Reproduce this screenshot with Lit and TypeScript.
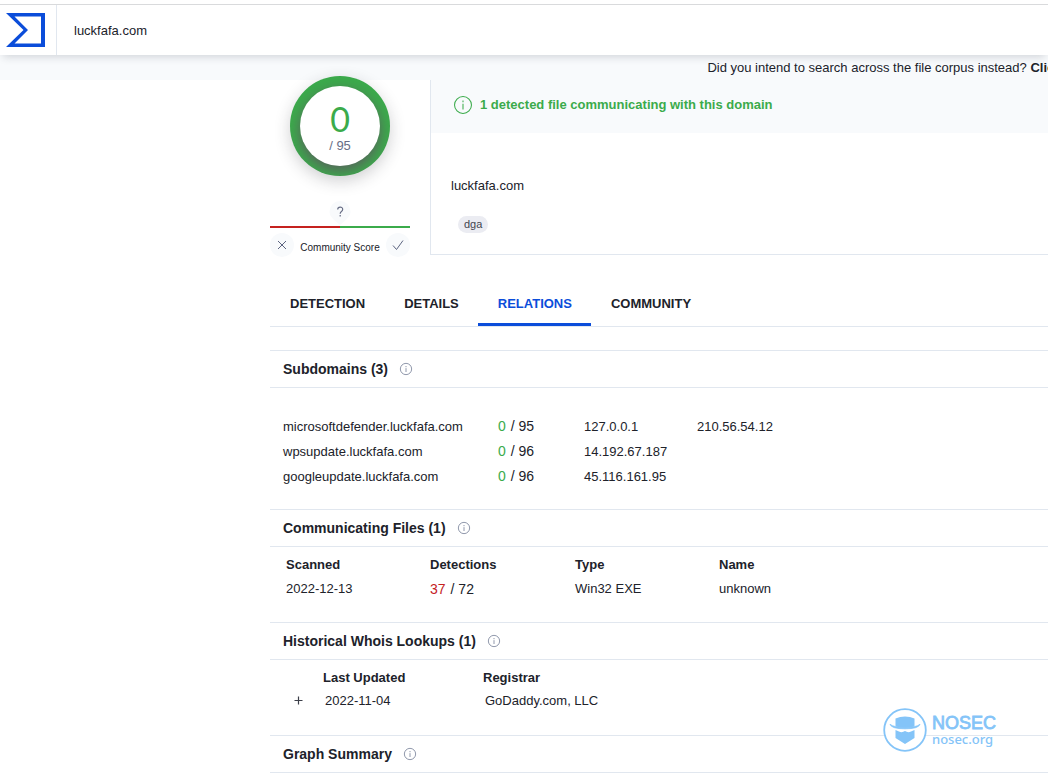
import { LitElement, html, css, svg } from "lit";
import { customElement, property } from "lit/decorators.js";
import { classMap } from "lit/directives/class-map.js";

const infoGlyph = svg`
  <circle cx="12" cy="12" r="11.3" />
  <path d="M12 6v2.400M12 10.300v7.700" />
`;

@customElement("section-heading")
class SectionHeading extends LitElement {
  @property() label = "";

  static styles = css`
    :host {
      display: block;
    }
    .bar {
      display: flex;
      align-items: center;
      gap: 12px;
      box-sizing: border-box;
      height: 38px;
      padding: 0 13px;
      border-top: 1px solid #e1e7ef;
      border-bottom: 1px solid #e1e7ef;
    }
    .title {
      margin: 0;
      font-size: 14px;
      line-height: 20px;
      font-weight: 700;
      color: #20222a;
    }
    .info {
      display: flex;
      padding: 0;
      border: 0;
      background: none;
      cursor: pointer;
    }
    .icon {
      width: 12px;
      height: 12px;
      overflow: visible;
      fill: none;
      stroke: #858da3;
      stroke-width: 1.8;
    }
  `;

  render() {
    return html`
      <div class="bar">
        <h2 class="title">${this.label}</h2>
        <button class="info" type="button" aria-label="Info">
          <svg class="icon" viewBox="0 0 24 24">${infoGlyph}</svg>
        </button>
      </div>
    `;
  }
}

@customElement("app-root")
class AppRoot extends LitElement {
  private tabs = ["DETECTION", "DETAILS", "RELATIONS", "COMMUNITY"];
  private current = "RELATIONS";
  private subdomains = [
    { name: "microsoftdefender.luckfafa.com", hits: 0, total: 95, ips: ["127.0.0.1", "210.56.54.12"] },
    { name: "wpsupdate.luckfafa.com", hits: 0, total: 96, ips: ["14.192.67.187", ""] },
    { name: "googleupdate.luckfafa.com", hits: 0, total: 96, ips: ["45.116.161.95", ""] },
  ];

  static styles = css`
    :host {
      display: block;
      position: relative;
      box-sizing: border-box;
      min-height: 100vh;
      padding-top: 4px;
      overflow: hidden;
      background: #fff;
      color: #20222a;
      font: 13px/20px "Liberation Sans", Arial, sans-serif;
    }
    button,
    input {
      font: inherit;
      color: inherit;
    }
    a {
      color: inherit;
      text-decoration: none;
    }

    .topbar {
      position: relative;
      display: flex;
      height: 50px;
      border-top: 1px solid #d9dadc;
      background: #fff;
      box-shadow: 0 5px 8px -3px rgba(40, 45, 60, 0.18);
    }
    .brand {
      display: flex;
      align-items: center;
      box-sizing: border-box;
      width: 57px;
      padding-left: 6px;
      border-right: 1px solid #e1e7ef;
    }
    .brand-mark {
      width: 39px;
      height: 34px;
      fill: #0b4dda;
    }
    .search {
      flex: 1;
      min-width: 0;
      padding: 2px 17px 0;
      border: 0;
      outline: 0;
      background: none;
    }

    .hint {
      display: flex;
      height: 25px;
      background: #f8fafc;
      white-space: nowrap;
      overflow: hidden;
    }
    .hint-text {
      margin: 0 0 0 67.5%;
      padding-top: 3px;
    }
    .hint-link {
      font-weight: 700;
    }

    .content {
      margin-left: 270px;
    }
    .summary {
      display: flex;
    }
    .score {
      display: flex;
      flex-direction: column;
      align-items: center;
      width: 140px;
      margin: -4px 20px 0 0;
    }
    .gauge {
      position: relative;
      display: grid;
      place-items: center;
      width: 100px;
      height: 100px;
      border-radius: 50%;
      background: #3bab4b;
      box-shadow: 0 5px 16px rgba(40, 40, 50, 0.22);
    }
    .gauge-inner {
      box-sizing: border-box;
      width: 80px;
      height: 80px;
      padding-top: 15px;
      border-radius: 50%;
      background: #fff;
      box-shadow: 0 5px 14px rgba(100, 70, 100, 0.75);
      clip-path: circle(50px at 50% 50%);
      text-align: center;
    }
    .gauge-hits {
      font-family: Lato, sans-serif;
      font-size: 34px;
      line-height: 36px;
      color: #3bab4b;
    }
    .gauge-total {
      line-height: 18px;
      color: #686e86;
    }
    .drop {
      width: 22px;
      height: 26px;
      margin-top: 24px;
    }
    .drop-shape {
      fill: #f8fafc;
    }
    .drop-mark {
      fill: none;
      stroke: #686e86;
      stroke-width: 1.2;
    }
    .meter {
      width: 100%;
      height: 2px;
      background: linear-gradient(90deg, #c5221f 50%, #3bab4b 50%);
    }
    .votes {
      display: flex;
      justify-content: space-between;
      align-items: center;
      width: 100%;
      margin-top: 5px;
    }
    .vote {
      display: grid;
      place-items: center;
      width: 24px;
      height: 24px;
      padding: 0;
      border: 0;
      border-radius: 50%;
      background: #f8fafc;
      cursor: pointer;
    }
    .vote-icon {
      width: 12px;
      height: 12px;
      fill: none;
      stroke: #5c6480;
      stroke-width: 1;
    }
    .votes-label {
      padding-top: 5px;
      font-size: 10px;
      line-height: 14px;
    }

    .panel {
      flex: 1;
      min-width: 0;
      box-sizing: border-box;
      height: 175px;
      border-left: 1px solid #e1e7ef;
      border-bottom: 1px solid #e1e7ef;
    }
    .notice {
      display: flex;
      align-items: center;
      gap: 8px;
      box-sizing: border-box;
      height: 53px;
      padding: 0 23px 3px;
      background: #f8fafc;
      color: #3bab4b;
      font-weight: 700;
    }
    .notice-icon {
      width: 18px;
      height: 18px;
      overflow: visible;
      fill: none;
      stroke: #3bab4b;
      stroke-width: 1.4;
    }
    .domain {
      padding: 43px 20px 0;
    }
    .tag {
      display: inline-block;
      margin: 20px 27px 0;
      padding: 0 6px;
      border-radius: 9px;
      background: #ebecf2;
      color: #42454f;
      font-size: 11px;
      line-height: 17px;
    }

    .tabs {
      display: flex;
      margin: 24px 0 23px;
      border-bottom: 1px solid #e1e7ef;
    }
    .tab {
      height: 45px;
      padding: 4px 19px 0 20px;
      border: 0;
      border-bottom: 3px solid transparent;
      background: none;
      font-weight: 700;
      cursor: pointer;
    }
    .tab.active {
      border-color: #0b4dda;
      color: #0b4dda;
    }

    .grid {
      width: 100%;
      border-collapse: collapse;
      table-layout: fixed;
    }
    .grid th,
    .grid td {
      padding: 0;
      text-align: left;
      white-space: nowrap;
    }
    .subdomains {
      padding: 26px 0 20px 13px;
    }
    .subdomains td {
      height: 25px;
    }
    .files {
      padding: 6px 0 21px 16px;
    }
    .files th,
    .files td {
      height: 24px;
    }
    .whois {
      padding: 6px 0 23px 23px;
    }
    .whois th {
      height: 24px;
    }
    .whois td {
      height: 22px;
    }
    .whois .value {
      padding-left: 2px;
    }
    .grid .ratio {
      padding-bottom: 1px;
      box-sizing: border-box;
      font-size: 14px;
    }
    .hits {
      margin-right: 5px;
      color: #3bab4b;
    }
    .hits.bad {
      color: #c5221f;
    }
    .w-name {
      width: 215px;
    }
    .w-ratio {
      width: 86px;
    }
    .w-ip {
      width: 113px;
    }
    .w-file {
      width: 144px;
    }
    .w-detections {
      width: 145px;
    }
    .w-toggle {
      width: 30px;
    }
    .w-date {
      width: 160px;
    }
    .expand {
      display: flex;
      padding: 0 0 2px;
      border: 0;
      background: none;
      cursor: pointer;
    }
    .expand-icon {
      width: 11px;
      height: 11px;
      fill: none;
      stroke: #3c3f49;
      stroke-width: 1.2;
    }

    .stamp {
      position: absolute;
      right: 52px;
      bottom: 24px;
      display: flex;
      align-items: center;
      gap: 5px;
      color: #84c4f8;
    }
    .stamp-icon {
      width: 44px;
      height: 44px;
      fill: #84c4f8;
    }
    .stamp-ring {
      fill: #fff;
      stroke: #84c4f8;
      stroke-width: 1.8;
    }
    .stamp-name {
      font-size: 18px;
      line-height: 18px;
      -webkit-text-stroke: 0.8px #84c4f8;
    }
    .stamp-site {
      font: 500 13px/14px "Noto Sans", sans-serif;
    }
  `;

  private ratio(hits: number, total: number) {
    return html`<span class=${classMap({ hits: true, bad: hits > 0 })}>${hits}</span>/ ${total}`;
  }

  render() {
    return html`
      <header class="topbar">
        <a class="brand" href="#" aria-label="Home">
          <svg class="brand-mark" viewBox="0 0 39 34">
            <path fill-rule="evenodd" d="M0 0H39V34H0L17.500 17ZM8.500 3.500L22 17L8.500 30.500H35V3.500Z" />
          </svg>
        </a>
        <input class="search" type="text" aria-label="Search" .value=${"luckfafa.com"} />
      </header>
      <div class="hint">
        <p class="hint-text">
          Did you intend to search across the file corpus instead? <a class="hint-link" href="#">Click</a>
        </p>
      </div>
      <main class="content">
        <div class="summary">
          <div class="score">
            <div class="gauge">
              <div class="gauge-inner">
                <div class="gauge-hits">0</div>
                <div class="gauge-total">/ 95</div>
              </div>
            </div>
            <svg class="drop" viewBox="0 0 22 26">
              <path class="drop-shape" d="M11 1a10.500 10.500 0 0 1 10.500 10.500c0 5-4 8-10.500 13.500C4.500 19.500.5 16.500.5 11.500A10.500 10.500 0 0 1 11 1z" />
              <path class="drop-mark" d="M8.700 9.600c0-3.300 5-3.300 5-.3 0 2.300-2.500 2.200-2.500 4.400M11.200 15v1.400" />
            </svg>
            <div class="meter"></div>
            <div class="votes">
              <button class="vote" type="button" aria-label="Downvote">
                <svg class="vote-icon" viewBox="0 0 12 12"><path d="M2 2l8 8M10 2l-8 8" /></svg>
              </button>
              <span class="votes-label">Community Score</span>
              <button class="vote" type="button" aria-label="Upvote">
                <svg class="vote-icon" viewBox="0 0 12 12"><path d="M1 6.500l3.500 4L11 1.500" /></svg>
              </button>
            </div>
          </div>
          <section class="panel">
            <div class="notice">
              <svg class="notice-icon" viewBox="0 0 24 24">${infoGlyph}</svg>
              <span>1 detected file communicating with this domain</span>
            </div>
            <div class="domain">luckfafa.com</div>
            <span class="tag">dga</span>
          </section>
        </div>
        <nav class="tabs">
          ${this.tabs.map(
            (t) => html`<button type="button" class=${classMap({ tab: true, active: t === this.current })}>${t}</button>`
          )}
        </nav>

        <section-heading label="Subdomains (3)"></section-heading>
        <div class="subdomains">
          <table class="grid">
            <colgroup>
              <col class="w-name" />
              <col class="w-ratio" />
              <col class="w-ip" />
              <col />
            </colgroup>
            <tbody>
              ${this.subdomains.map(
                (s) => html`<tr>
                  <td><a href="#">${s.name}</a></td>
                  <td class="ratio">${this.ratio(s.hits, s.total)}</td>
                  ${s.ips.map((ip) => html`<td>${ip ? html`<a href="#">${ip}</a>` : ""}</td>`)}
                </tr>`
              )}
            </tbody>
          </table>
        </div>

        <section-heading label="Communicating Files (1)"></section-heading>
        <div class="files">
          <table class="grid">
            <colgroup>
              <col class="w-file" />
              <col class="w-detections" />
              <col class="w-file" />
              <col />
            </colgroup>
            <thead>
              <tr>
                <th>Scanned</th>
                <th>Detections</th>
                <th>Type</th>
                <th>Name</th>
              </tr>
            </thead>
            <tbody>
              <tr>
                <td>2022-12-13</td>
                <td class="ratio">${this.ratio(37, 72)}</td>
                <td>Win32 EXE</td>
                <td><a href="#">unknown</a></td>
              </tr>
            </tbody>
          </table>
        </div>

        <section-heading label="Historical Whois Lookups (1)"></section-heading>
        <div class="whois">
          <table class="grid">
            <colgroup>
              <col class="w-toggle" />
              <col class="w-date" />
              <col />
            </colgroup>
            <thead>
              <tr>
                <th></th>
                <th>Last Updated</th>
                <th>Registrar</th>
              </tr>
            </thead>
            <tbody>
              <tr>
                <td>
                  <button class="expand" type="button" aria-label="Expand">
                    <svg class="expand-icon" viewBox="0 0 11 11"><path d="M5.500 1.500v8M1.500 5.500h8" /></svg>
                  </button>
                </td>
                <td class="value">2022-11-04</td>
                <td class="value">GoDaddy.com, LLC</td>
              </tr>
            </tbody>
          </table>
        </div>

        <section-heading label="Graph Summary"></section-heading>
      </main>
      <div class="stamp">
        <svg class="stamp-icon" viewBox="0 0 44 44">
          <circle class="stamp-ring" cx="22" cy="22" r="20.800" />
          <path d="M12.500 10.500Q17 8.500 22 8.500T31.500 10.500V18.500Q22 21 12.500 18.500Z" />
          <path d="M7 16.300Q11 19.500 22 19.500T37 16.300Q35.500 20.800 22 20.800T7 16.300Z" stroke="#84c4f8" stroke-width=".8" />
          <path d="M12.500 22L16 23.500Q19 25 22 23Q25 25 28 23.500L31.500 22V30L22 36L12.500 30Z" />
        </svg>
        <div>
          <div class="stamp-name">NOSEC</div>
          <div class="stamp-site">nosec.org</div>
        </div>
      </div>
    `;
  }
}
